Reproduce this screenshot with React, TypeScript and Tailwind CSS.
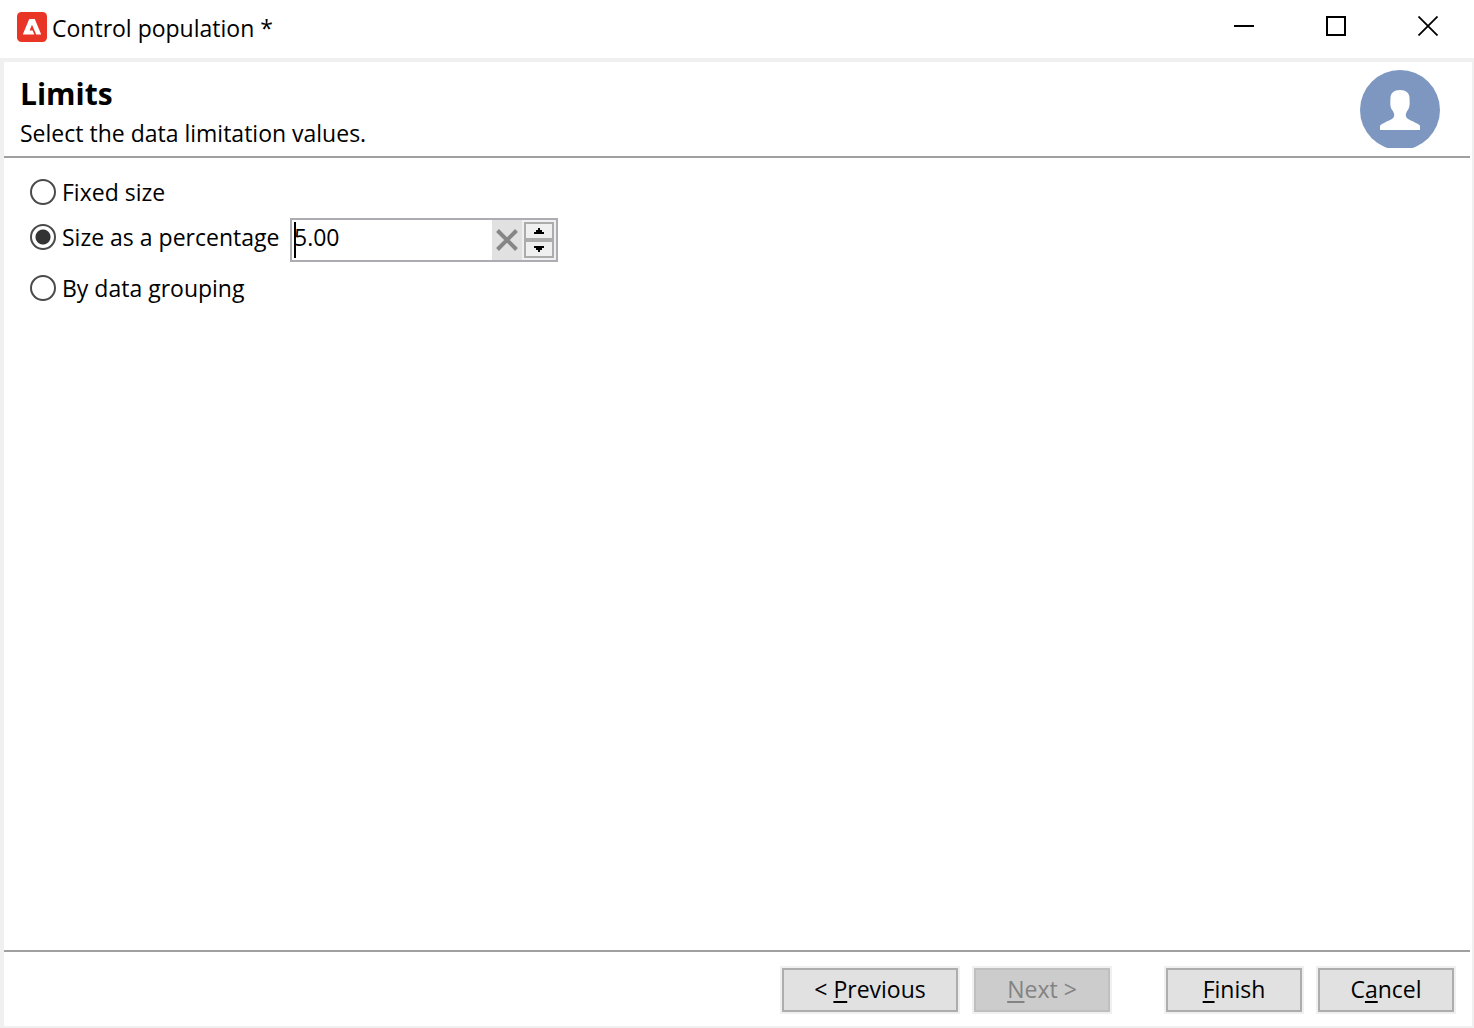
import React, { useState } from 'react';

type LimitMode = 'fixed' | 'percentage' | 'grouping';

interface LimitOptionProps {
  value: LimitMode;
  label: string;
  selected: LimitMode;
  onSelect: (value: LimitMode) => void;
}

const LimitOption: React.FC<LimitOptionProps> = ({ value, label, selected, onSelect }) => (
  <label className="flex h-8 items-center gap-1.5 whitespace-nowrap">
    <input
      type="radio"
      name="limit"
      value={value}
      checked={selected === value}
      onChange={() => onSelect(value)}
      className="h-[26px] w-[26px] shrink-0 appearance-none rounded-full border-2 border-[#4a4a4a] bg-white checked:bg-[radial-gradient(circle,#333_7px,transparent_8px)]"
    />
    {label}
  </label>
);

interface WizardButtonProps {
  children: React.ReactNode;
  wide?: boolean;
  disabled?: boolean;
}

const WizardButton: React.FC<WizardButtonProps> = ({ children, wide, disabled }) => (
  <button
    type="button"
    disabled={disabled}
    className={`h-11 border-2 border-[#adadad] bg-[#e1e1e1] pb-0.5 ring-2 ring-[#f0f0f0] whitespace-nowrap disabled:border-[#bfbfbf] disabled:bg-[#cccccc] disabled:text-[#838383] ${
      wide ? 'w-44' : 'w-[136px]'
    }`}
  >
    {children}
  </button>
);

// Underlined access key
const Key: React.FC<{ children: React.ReactNode }> = ({ children }) => (
  <span className="underline decoration-2 underline-offset-3">{children}</span>
);

const AppLogo = () => (
  <svg width="32" height="32" viewBox="0 0 32 32" aria-hidden="true">
    <rect x="1" y="1" width="30" height="30" rx="4.500" fill="#e93525" />
    <path
      d="M13.200 8h5.600L25.200 23.500h-5L16 13.800l-2.400 5.700h3l1.700 4H6.800z"
      fill="#fff"
    />
  </svg>
);

const ProfileBadge = () => (
  <svg width="80" height="78" viewBox="0 0 80 78" aria-hidden="true">
    <circle cx="40" cy="40" r="40" fill="#7e97c1" />
    <path
      d="M40 20c6 0 9.500 3 9.500 8 .3 6 .5 9-2 12.500-1.500 2-2 4-1.500 6 1 3 6 4 10 6.500 3 1.300 4 2 4 3.500V60H20v-3.500c0-1.500 1-2.200 4-3.500 4-2.500 9-3.500 10-6.500.5-2 0-4-1.500-6-2.500-3.500-2.300-6.500-2-12.500 0-5 3.500-8 9.500-8z"
      fill="#fff"
    />
  </svg>
);

export default function App() {
  const [mode, setMode] = useState<LimitMode>('percentage');
  const [percentage, setPercentage] = useState('5.00');

  const step = (delta: number) => {
    setPercentage((Number(percentage) + delta).toFixed(2));
  };

  return (
    <div className="flex min-h-screen flex-col bg-white font-['Open_Sans','Noto_Sans',sans-serif] text-[23px] leading-8 text-black">
      {/* Title bar */}
      <header className="flex h-[58px] items-center justify-between pl-4">
        <div className="flex items-center gap-1 pb-1">
          <AppLogo />
          <span className="pt-0.5">Control population *</span>
        </div>
        <div className="flex pb-1.5">
          <button type="button" aria-label="Minimize" className="flex h-10 w-[92px] items-center justify-center">
            <svg width="20" height="20" viewBox="0 0 20 20">
              <path d="M0 10h20" stroke="#000" strokeWidth="2" />
            </svg>
          </button>
          <button type="button" aria-label="Maximize" className="flex h-10 w-[92px] items-center justify-center">
            <svg width="20" height="20" viewBox="0 0 20 20">
              <path d="M1 1h18v18H1z" fill="none" stroke="#000" strokeWidth="2" />
            </svg>
          </button>
          <button type="button" aria-label="Close" className="flex h-10 w-[92px] items-center justify-center">
            <svg width="20" height="20" viewBox="0 0 20 20">
              <path d="M.5.5l19 19M19.500.5l-19 19" stroke="#000" strokeWidth="1.800" />
            </svg>
          </button>
        </div>
      </header>

      <div className="flex flex-1 flex-col border-4 border-r-2 border-b-2 border-[#f0f0f0]">
        {/* Step heading */}
        <div className="mr-0.5 flex h-24 justify-between border-b-2 border-[#a0a0a0] pt-2 pr-[30px] pl-4">
          <div>
            <h1 className="text-[30px] leading-[47px] font-bold">Limits</h1>
            <p>Select the data limitation values.</p>
          </div>
          <ProfileBadge />
        </div>

        <main className="flex flex-1 flex-col items-start gap-2.5 pt-[18px] pl-[26px]">
          <LimitOption value="fixed" label="Fixed size" selected={mode} onSelect={setMode} />
          <div className="flex h-11">
            <div className="w-[260px] pt-[3px]">
              <LimitOption
                value="percentage"
                label="Size as a percentage"
                selected={mode}
                onSelect={setMode}
              />
            </div>
            <div className="relative flex w-[268px] border-2 border-[#abadb3] bg-[#f0f0f0]">
              <input
                type="text"
                aria-label="Percentage"
                value={percentage}
                onChange={(e) => setPercentage(e.target.value)}
                className="min-w-0 flex-1 bg-white pb-1.5 pl-0.5 outline-none"
              />
              {/* Text cursor */}
              <span className="absolute top-0.5 left-0.5 h-9 w-0.5 bg-black" />
              <button
                type="button"
                aria-label="Clear"
                onClick={() => setPercentage('')}
                className="flex w-[30px] items-center justify-center bg-[#e1e1e1]"
              >
                <svg width="22" height="22" viewBox="0 0 22 22">
                  <path d="M1.500 1.500l19 19M20.500 1.500l-19 19" stroke="#868686" strokeWidth="4" />
                </svg>
              </button>
              <div className="flex w-[34px] flex-col p-0.5">
                <button
                  type="button"
                  aria-label="Increase"
                  onClick={() => step(1)}
                  className="flex flex-1 items-center justify-center border-2 border-[#acacac] bg-[#f0f0f0]"
                >
                  <svg width="10" height="6" viewBox="0 0 10 6">
                    <path d="M4 0h2v2h2v2h2v2H0V4h2V2h2z" />
                  </svg>
                </button>
                <button
                  type="button"
                  aria-label="Decrease"
                  onClick={() => step(-1)}
                  className="flex flex-1 items-center justify-center border-2 border-[#acacac] bg-[#f0f0f0]"
                >
                  <svg width="10" height="6" viewBox="0 0 10 6">
                    <path d="M0 0h10v2H8v2H6v2H4V4H2V2H0z" />
                  </svg>
                </button>
              </div>
            </div>
          </div>
          <LimitOption value="grouping" label="By data grouping" selected={mode} onSelect={setMode} />
        </main>

        {/* Wizard navigation */}
        <footer className="mr-0.5 flex justify-end gap-4 border-t-2 border-[#a0a0a0] pt-4 pr-4 pb-3.5">
          <WizardButton wide>
            &lt; <Key>P</Key>revious
          </WizardButton>
          <WizardButton disabled>
            <Key>N</Key>ext &gt;
          </WizardButton>
          <div className="flex gap-4 pl-10">
            <WizardButton>
              <Key>F</Key>inish
            </WizardButton>
            <WizardButton>
              C<Key>a</Key>ncel
            </WizardButton>
          </div>
        </footer>
      </div>
    </div>
  );
}
